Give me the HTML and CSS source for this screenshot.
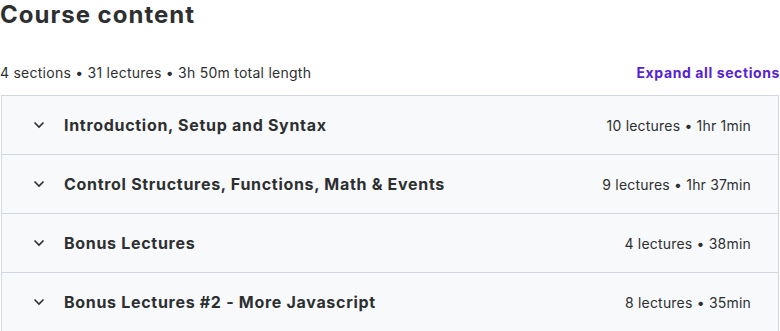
FILE: index.html
```html
<!DOCTYPE html>
<html lang="en">
<head>
    <meta charset="UTF-8">
    <meta name="viewport" content="width=device-width, initial-scale=1.0">
    <title>Course content</title>
    <link rel="stylesheet" href="styles.css">
</head>
<body>
    <div class="curriculum">
        <h2 class="heading">Course content</h2>
        <div class="summary">
            <span class="stats">4 sections • 31 lectures • 3h 50m total length</span>
            <button class="expand">Expand all sections</button>
        </div>
        <div class="sections">
            <div class="section">
                <svg class="chevron" viewBox="0 0 12 8"><path d="M1.5 1.5 6 6l4.5-4.5"/></svg>
                <span class="section-title">Introduction, Setup and Syntax</span>
                <span class="section-meta">10 lectures • 1hr 1min</span>
            </div>
            <div class="section">
                <svg class="chevron" viewBox="0 0 12 8"><path d="M1.5 1.5 6 6l4.5-4.5"/></svg>
                <span class="section-title">Control Structures, Functions, Math &amp; Events</span>
                <span class="section-meta">9 lectures • 1hr 37min</span>
            </div>
            <div class="section">
                <svg class="chevron" viewBox="0 0 12 8"><path d="M1.5 1.5 6 6l4.5-4.5"/></svg>
                <span class="section-title">Bonus Lectures</span>
                <span class="section-meta">4 lectures • 38min</span>
            </div>
            <div class="section">
                <svg class="chevron" viewBox="0 0 12 8"><path d="M1.5 1.5 6 6l4.5-4.5"/></svg>
                <span class="section-title">Bonus Lectures #2 - More Javascript</span>
                <span class="section-meta">8 lectures • 35min</span>
            </div>
        </div>
    </div>
</body>
</html>
```

FILE: styles.css
```css
body {
    margin: 0;
    font-family: 'Inter', 'Noto Sans', sans-serif;
    color: #2d2f31;
    background-color: #fff;
}

.curriculum {
    width: 780px;
}

.heading {
    margin: 0;
    font-size: 24px;
    font-weight: 700;
    line-height: 30px;
    letter-spacing: 1px;
}

.summary {
    display: flex;
    justify-content: space-between;
    align-items: center;
    margin-top: 31px;
    height: 22px;
}

.stats {
    font-size: 14px;
    letter-spacing: 0.25px;
    color: #2d2f31;
}

.expand {
    border: none;
    background: none;
    padding: 0;
    font-family: inherit;
    font-size: 14px;
    font-weight: 700;
    letter-spacing: 0.6px;
    color: #5624d0;
    cursor: pointer;
}

.sections {
    margin-top: 12px;
    margin-left: 1px;
    width: 776px;
    border: 1px solid #d1d7dc;
    border-bottom: none;
}

.section {
    display: flex;
    align-items: center;
    height: 58px;
    padding: 0 27px 0 31px;
    background-color: #f7f9fa;
    border-bottom: 1px solid #d1d7dc;
}

.chevron {
    width: 12px;
    height: 8px;
    fill: none;
    stroke: #2d2f31;
    stroke-width: 1.6;
    margin-right: 19px;
}

.section-title {
    flex: 1;
    font-size: 16px;
    font-weight: 700;
    letter-spacing: 0.7px;
}

.section-meta {
    font-size: 14px;
    letter-spacing: 0.2px;
    color: #2d2f31;
}
```
